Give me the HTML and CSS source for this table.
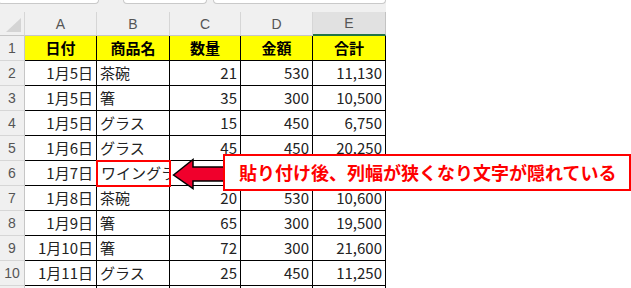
FILE: index.html
```html
<!DOCTYPE html>
<html lang="ja">
<head>
    <meta charset="UTF-8">
    <title>売上表</title>
    <link rel="stylesheet" href="styles.css">
</head>
<body>
    <div class="sheet">
        <div class="topbar">
            <div class="box box_name"></div>
            <div class="box box_mid"></div>
            <div class="box box_formula"></div>
        </div>

        <div class="grid">
            <div class="corner"><span class="tri"></span></div>
            <div class="colhead">A</div>
            <div class="colhead">B</div>
            <div class="colhead">C</div>
            <div class="colhead">D</div>
            <div class="colhead sel">E</div>

            <div class="rowhead">1</div>
            <div class="cell head">日付</div>
            <div class="cell head">商品名</div>
            <div class="cell head">数量</div>
            <div class="cell head">金額</div>
            <div class="cell head">合計</div>

            <div class="rowhead">2</div>
            <div class="cell num">1月5日</div>
            <div class="cell txt">茶碗</div>
            <div class="cell num">21</div>
            <div class="cell num">530</div>
            <div class="cell num">11,130</div>

            <div class="rowhead">3</div>
            <div class="cell num">1月5日</div>
            <div class="cell txt">箸</div>
            <div class="cell num">35</div>
            <div class="cell num">300</div>
            <div class="cell num">10,500</div>

            <div class="rowhead">4</div>
            <div class="cell num">1月5日</div>
            <div class="cell txt">グラス</div>
            <div class="cell num">15</div>
            <div class="cell num">450</div>
            <div class="cell num">6,750</div>

            <div class="rowhead">5</div>
            <div class="cell num">1月6日</div>
            <div class="cell txt">グラス</div>
            <div class="cell num">45</div>
            <div class="cell num">450</div>
            <div class="cell num">20,250</div>

            <div class="rowhead">6</div>
            <div class="cell num">1月7日</div>
            <div class="cell txt hit">ワイングラス</div>
            <div class="cell num">25</div>
            <div class="cell num">2,000</div>
            <div class="cell num">50,000</div>

            <div class="rowhead">7</div>
            <div class="cell num">1月8日</div>
            <div class="cell txt">茶碗</div>
            <div class="cell num">20</div>
            <div class="cell num">530</div>
            <div class="cell num">10,600</div>

            <div class="rowhead">8</div>
            <div class="cell num">1月9日</div>
            <div class="cell txt">箸</div>
            <div class="cell num">65</div>
            <div class="cell num">300</div>
            <div class="cell num">19,500</div>

            <div class="rowhead">9</div>
            <div class="cell num">1月10日</div>
            <div class="cell txt">箸</div>
            <div class="cell num">72</div>
            <div class="cell num">300</div>
            <div class="cell num">21,600</div>

            <div class="rowhead">10</div>
            <div class="cell num">1月11日</div>
            <div class="cell txt">グラス</div>
            <div class="cell num">25</div>
            <div class="cell num">450</div>
            <div class="cell num">11,250</div>

            <div class="rowhead">11</div>
            <div class="cell blank"></div>
            <div class="cell blank"></div>
            <div class="cell blank"></div>
            <div class="cell blank"></div>
            <div class="cell blank"></div>
        </div>

        <!-- callout pointing at the clipped cell -->
        <svg class="arrow" width="54" height="34" viewBox="0 0 54 34">
            <polygon points="1.5,18 21,2.5 21,10 53,10 53,24 21,24 21,31.5"
                     fill="#f0002c" stroke="#000" stroke-width="1.5" stroke-linejoin="miter"/>
        </svg>
        <div class="note">貼り付け後、列幅が狭くなり文字が隠れている</div>
    </div>
</body>
</html>
```

FILE: styles.css
```css
html, body { margin: 0; padding: 0; overflow: hidden; background: #fff; }
body { font-family: "Noto Sans CJK JP", "Noto Sans", sans-serif; color: #222; }

.sheet { position: relative; width: 631px; height: 288px; }

/* strip above the column letters */
.topbar { display: flex; width: 386px; height: 12px; background: #f0f0f0; box-sizing: border-box; }
.box { height: 4px; background: #fff; border: 1px solid #c9c9c9; border-top: none; border-radius: 0 0 5px 5px; box-sizing: border-box; }
.box_name { width: 101px; margin-left: -2px; }
.box_mid { width: 84px; margin-left: 24px; }
.box_formula { width: 173px; margin-left: 6px; }

.grid { display: grid; grid-template-columns: 25px 72px 73px 71px 72px 73px; grid-template-rows: 24px; grid-auto-rows: 25px; width: 386px; }

.corner { position: relative; background: #f0f0f0; border-right: 1px solid #d6d6d6; border-bottom: 1px solid #c6c6c6; }
.tri { position: absolute; right: 3px; bottom: 3px; width: 0; height: 0; border-left: 15px solid transparent; border-bottom: 14px solid #d4d4d4; }

.colhead { background: #f0f0f0; border-right: 1px solid #d6d6d6; border-bottom: 1px solid #c6c6c6; color: #555; font-family: "Liberation Sans", sans-serif; font-size: 14px; display: flex; align-items: center; justify-content: center; }
.colhead.sel { background: #e1e1e1; border-bottom: 2px solid #217346; border-right-color: #c3c3c3; }

.rowhead { background: #f0f0f0; border-right: 1px solid #c6c6c6; border-bottom: 1px solid #d6d6d6; color: #555; font-family: "Liberation Sans", sans-serif; font-size: 14px; display: flex; align-items: center; justify-content: center; }

.cell { border-right: 1px solid #000; border-bottom: 1px solid #000; font-size: 15px; line-height: 24px; white-space: nowrap; overflow: hidden; padding: 0 3px; }
.cell.head { background: #ff0; font-weight: 700; color: #000; text-align: center; }
.cell.num { text-align: right; }
.cell.txt { text-align: left; }
.cell.blank { border-bottom: none; }
.cell.hit { overflow: hidden; outline: 2px solid #f00; outline-offset: -1px; position: relative; z-index: 2; padding-left: 4px; }

.arrow { position: absolute; left: 172px; top: 157px; z-index: 3; }

.note { position: absolute; left: 223px; top: 154px; width: 408px; height: 37px; box-sizing: border-box; border: 2px solid #f00; background: #fff; color: #f00; font-weight: 700; font-size: 18px; line-height: 32px; padding-left: 14px; white-space: nowrap; z-index: 4; }
```
